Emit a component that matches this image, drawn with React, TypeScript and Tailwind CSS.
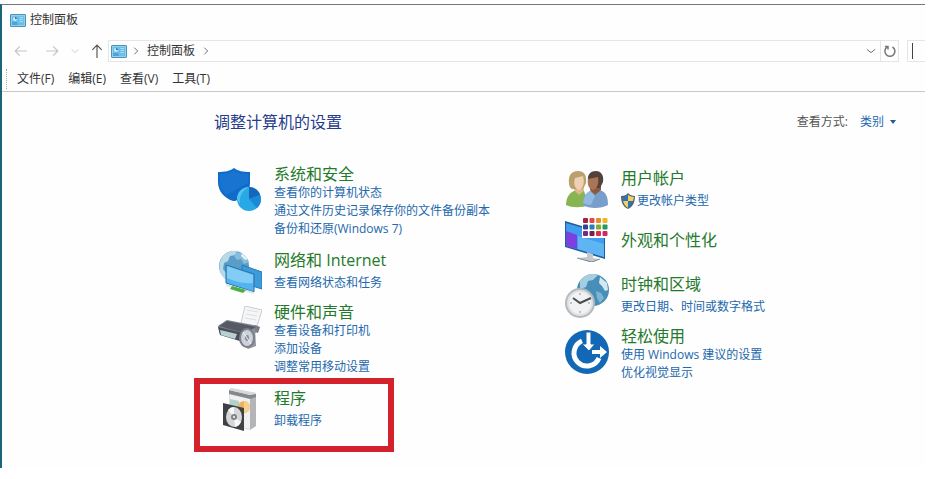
import type { ReactNode } from "react";

const PanelIcon = () => (
  <svg className="block h-[13px] w-4" viewBox="0 0 16 13" aria-hidden="true">
    <rect x=".5" y=".5" width="15" height="12" rx=".5" fill="#8fd0ee" stroke="#4f94b8" />
    <rect x="2" y="2" width="12" height="9" fill="#6bbdea" />
    <circle cx="5" cy="5" r="2" fill="#c9ebfa" />
    <path d="M5 5V3a2 2 0 0 1 2 2z" fill="#2a6f9f" />
    <path d="M9.5 3.5h3.500M9.500 5.500h3.500M9.500 7.500h3.500" stroke="#a9dcf4" />
    <path d="M2 8h5l1 3H2z" fill="#4da3d8" />
  </svg>
);

const ShieldIcon = () => (
  <svg viewBox="0 0 44 44" className="h-11 w-11" aria-hidden="true">
    <path d="M0 4c7 0 12-1 16-4 4 3 9 4 16 4v11c0 9-6 15-15 18h-2C6 30 0 23 0 14z" fill="#0f6cc8" />
    <path d="M2 6c6 0 10-1 14-4 4 3 8 4 14 4v9L8 27C4 23 2 19 2 14z" fill="#1874d0" />
    <circle cx="31" cy="31" r="12" fill="#27a9e6" />
    <path d="M31 31V19a12 12 0 0 1 11 8z" fill="#1468bb" />
    <path d="M31 31l11-4a12 12 0 0 1-3 13z" fill="#1e88d8" />
    <path d="M31 19a12 12 0 0 0-12 12l3 5c-1-8 2-13 9-17z" fill="#56c2f0" />
  </svg>
);

const NetworkIcon = () => (
  <svg viewBox="0 0 44 44" className="h-11 w-11" aria-hidden="true">
    <circle cx="16" cy="16" r="15" fill="#5a9ec8" />
    <path d="M5 6c4-4 9-6 14-5l-2 4-5 1-2 5-4 2-1 6 3 4v7C1 25-1 14 5 6z" fill="#b8d9e7" />
    <path d="M19 2c6 1 10 5 12 10l-5 2-3-5-4 1-3-4z" fill="#86bdd9" />
    <path d="M24 3l6 6-3 1-4-4z" fill="#e4f0f2" />
    <path d="M24 15l20 7v17l-20-6z" fill="#3d9bdc" stroke="#2878b0" />
    <path d="M8 15l28 9v18L8 33z" fill="#52b3ee" stroke="#2572a8" />
    <path d="M9 16l26 9v8c-10 1-19-2-26-5z" fill="#82cdf6" />
    <path d="M8 34l28 8v2L8 36z" fill="#dce4e0" />
    <path d="M14 36l14 4-3 3-13-4z" fill="#4cae47" />
  </svg>
);

const PrinterIcon = () => (
  <svg viewBox="0 0 44 44" className="h-11 w-11" aria-hidden="true">
    <path d="M27 0l17 4-5 16-16-3z" fill="#f5f6f8" stroke="#c9ccd0" />
    <path d="M29 4l11 2M28 8l11 2M27 12l11 2" stroke="#dadee4" />
    <path d="M37 19l5 2-2 6-5-2z" fill="#70757f" />
    <path d="M0 20l9-6 30 6 1 5-14 10L2 28z" fill="#7c8089" />
    <path d="M1 20l8-5 29 6-12 6z" fill="#555a64" />
    <path d="M0 21l25 6v9L2 29z" fill="#494e58" />
    <path d="M2 24l17 4-2 5-14-4z" fill="#b9d0d3" />
    <path d="M22 27l15-4 1 17-8 3-7-6z" fill="#8e939c" />
    <ellipse cx="29" cy="32" rx="7" ry="9" fill="#cdd1d8" stroke="#7b808a" strokeWidth="2" />
    <ellipse cx="29" cy="32" rx="2" ry="3" fill="#858e9a" />
    <path d="M25 26l8 12" stroke="#f4f5f6" />
  </svg>
);

const ProgramsIcon = () => (
  <svg viewBox="0 0 44 44" className="h-11 w-11" aria-hidden="true">
    <path d="M11 2l2-2 25 5v33l-7 4-20-5z" fill="#dcdedf" />
    <path d="M32 8l6-2v32l-6 4z" fill="#b3b5b8" />
    <path d="M12 4l20 5v32l-20-5z" fill="#f0f1f0" />
    <path d="M11 2l21 5 6-1v3l-6 2-21-5z" fill="#85888d" />
    <path d="M13 0l25 5-6 2-21-5z" fill="#d6d8da" />
    <path d="M12 11l9 2v9l-9-2z" fill="#b5d1ca" />
    <circle cx="26" cy="19" r="6" fill="#edb35a" />
    <path d="M26 13v12a6 6 0 0 0 0-12z" fill="#f5d092" />
    <path d="M5 15l21 5v23L5 37z" fill="#3f4144" />
    <ellipse cx="16" cy="29" rx="8" ry="10" fill="#d4d6d8" />
    <path d="M16 29l-6-7a8 10 0 0 1 6-3zM16 29l7 5a8 10 0 0 1-6 5z" fill="#f8f8f8" />
    <circle cx="16" cy="29" r="3" fill="#808387" />
    <circle cx="16" cy="29" r="1" fill="#fff" />
  </svg>
);

const UsersIcon = () => (
  <svg viewBox="0 0 44 44" className="h-11 w-11" aria-hidden="true">
    <path d="M1 37c0-8 4-13 10-15l8 1 5 14c-7 3-17 3-23 0z" fill="#86b552" />
    <path d="M9 22l5 5 5-4-1-5h-8z" fill="#e0b690" />
    <path d="M4 15C3 7 7 3 13 3s9 4 8 12l-3 6H7c-2-1-3-3-3-6z" fill="#b9a06c" />
    <path d="M10 10l8-2c2 7 0 13-4 14-4-1-6-6-4-12z" fill="#efd0b2" />
    <path d="M18 37c0-9 3-13 10-15h7c6 2 8 7 8 15-7 4-19 4-25 0z" fill="#789fcb" />
    <path d="M25 22l5 5 6-5v-6H25z" fill="#8e593f" />
    <path d="M23 13c-1-7 3-10 8-10s8 4 7 11l-3 6h-9z" fill="#54423a" />
    <path d="M23 11l10-2c1 7-1 12-5 13-4-1-6-5-5-11z" fill="#a87558" />
    <path d="M25 23l5 5-4 9c-3 0-6-1-8-2 1-6 3-10 7-12z" fill="#92b9e1" />
  </svg>
);

const swatches = ["#a12443", "#df4a40", "#e88a2f", "#edb82e", "#30468f", "#267fbd", "#7fae35", "#219b58", "#722b88", "#7a1f45", "#d8304c", "#cf2a60"];

const AppearanceIcon = () => (
  <svg viewBox="0 0 44 44" className="h-11 w-11" aria-hidden="true">
    <path d="M0 3l40 12v26L0 29z" fill="#1c5f9c" />
    <path d="M1 5l38 11v23L1 28z" fill="#3f9cee" />
    <path d="M13 18l26 8v13l-26-8z" fill="#5fb4f4" />
    <path d="M1 13l11 4v14L1 28z" fill="#7c3fe0" />
    <path d="M22 34l6 2v4l6 1-7 4-14-5 9-1z" fill="#c3c9ce" />
    <path d="M12 40l15 4 8-3" fill="none" stroke="#808890" />
    <path d="M17 0h27v20H17z" fill="#fff" />
    {swatches.map((fill, i) => (
      <rect key={i} x={18 + (i % 4) * 6.5} y={Math.floor(i / 4) * 6.5} width="5" height="5" rx="1" fill={fill} />
    ))}
  </svg>
);

const ClockIcon = () => (
  <svg viewBox="0 0 44 44" className="h-11 w-11" aria-hidden="true">
    <circle cx="28" cy="16" r="16" fill="#478fb9" />
    <path d="M15 7c4-6 12-9 18-6l-5 5-5 1-2 6-6 2z" fill="#a7cee0" />
    <path d="M35 3l7 6 1 7-3 1-3-5-3-3z" fill="#d5e8ee" />
    <path d="M31 17l5 2 3 5-4 5-3-5z" fill="#7db6d2" />
    <circle cx="15" cy="29" r="14" fill="#dfe3e5" stroke="#b4b9bd" strokeWidth="2" />
    <circle cx="15" cy="29" r="11" fill="#f1f2f3" />
    <path d="M8 24l7 5 11-5" fill="none" stroke="#4b4e51" strokeWidth="2" />
    <path d="M15 19v2M15 37v2M5 29h2M23 29h2" stroke="#8c9196" />
  </svg>
);

const AccessIcon = () => (
  <svg viewBox="0 0 44 44" className="h-11 w-11" aria-hidden="true">
    <circle cx="22" cy="22" r="22" fill="#1268b5" />
    <path d="M17 11A13 13 0 1 0 34 28" fill="none" stroke="#fff" strokeWidth="5" />
    <path d="M21 2h5v12h4l-6 7-7-7h4z" fill="#fff" stroke="#1268b5" />
    <path d="M27 20h8v-4l7 6-7 6v-4h-8z" fill="#fff" />
  </svg>
);

const UacShield = () => (
  <svg viewBox="0 0 16 16" className="h-4 w-4 shrink-0" aria-hidden="true">
    <path d="M0 3c3 0 6-1 7-3 2 2 4 3 7 3 0 6-2 11-7 13C2 14 0 9 0 3z" fill="#56636d" />
    <path d="M1 4c2 0 4-1 6-2v6H2z" fill="#2c73b8" />
    <path d="M7 2c2 1 4 2 6 2l-1 4H7z" fill="#f3d060" />
    <path d="M2 8h5v7C4 13 3 11 2 8z" fill="#f3d060" />
    <path d="M7 8h5c-1 3-2 5-5 7z" fill="#2c73b8" />
  </svg>
);

type Category = {
  title: string;
  links: string[];
  icon: ReactNode;
  space: string;
  shield?: boolean;
  marked?: boolean;
};

const leftCategories: Category[] = [
  { title: "系统和安全", links: ["查看你的计算机状态", "通过文件历史记录保存你的文件备份副本", "备份和还原(Windows 7)"], icon: <ShieldIcon />, space: "" },
  { title: "网络和 Internet", links: ["查看网络状态和任务"], icon: <NetworkIcon />, space: "mt-3" },
  { title: "硬件和声音", links: ["查看设备和打印机", "添加设备", "调整常用移动设置"], icon: <PrinterIcon />, space: "mt-2" },
  { title: "程序", links: ["卸载程序"], icon: <ProgramsIcon />, space: "mt-3", marked: true },
];

const rightCategories: Category[] = [
  { title: "用户帐户", links: ["更改帐户类型"], icon: <UsersIcon />, space: "mt-1", shield: true },
  { title: "外观和个性化", links: [], icon: <AppearanceIcon />, space: "mt-1.5" },
  { title: "时钟和区域", links: ["更改日期、时间或数字格式"], icon: <ClockIcon />, space: "mt-3" },
  { title: "轻松使用", links: ["使用 Windows 建议的设置", "优化视觉显示"], icon: <AccessIcon />, space: "mt-2" },
];

function CategoryItem({ item }: { item: Category }) {
  const count = item.links.length;
  return (
    <section className={`relative flex gap-3 ${count === 0 ? "items-center" : "items-start"} ${item.space}`}>
      <div className={`w-11 shrink-0 ${count > 1 ? "pt-1" : ""}`}>{item.icon}</div>
      <div>
        <h2 className="text-base leading-5">
          <a href="#" className="text-[#247a2b]">{item.title}</a>
        </h2>
        {count > 0 && (
          <ul className={count === 1 ? "mt-1" : ""}>
            {item.links.map((link) => (
              <li key={link} className="text-xs leading-[18px] whitespace-nowrap">
                <a href="#" className="flex items-center text-[#2368ad]">
                  {item.shield && <UacShield />}
                  {link}
                </a>
              </li>
            ))}
          </ul>
        )}
      </div>
      {item.marked && <span className="pointer-events-none absolute -top-2.5 -left-6 h-[74px] w-[200px] border-[6px] border-[#d3222b]" />}
    </section>
  );
}

function Stroke({ d, className }: { d: string; className: string }) {
  return (
    <svg viewBox="0 0 12 12" className={className} fill="none" stroke="currentColor" aria-hidden="true">
      <path d={d} />
    </svg>
  );
}

export default function App() {
  return (
    <div className="min-h-screen bg-white pt-1 pr-1 font-['Open_Sans','Noto_Sans_CJK_SC',sans-serif] text-xs text-[#333]">
      <div className="border-t border-l-2 border-t-[#777] border-l-[#1c6577] bg-[#fefefe] pb-9">
        <header className="border-b border-[#c9c9c9]">
          <div className="flex h-[30px] items-center gap-1 pl-2">
            <PanelIcon />
            <span>控制面板</span>
          </div>
          <div className="mt-1 flex h-6 items-center">
            <div className="flex w-[106px] shrink-0 items-center pl-3">
              <button aria-label="后退" className="w-[31px] text-[#c4c4c4]"><Stroke className="h-3.5 w-3.5" d="M11 6H1M5 2L1 6l4 4" /></button>
              <button aria-label="前进" className="w-[25px] text-[#c4c4c4]"><Stroke className="h-3.5 w-3.5" d="M1 6h10M7 2l4 4-4 4" /></button>
              <button aria-label="最近位置" className="w-5 text-[#c4c4c4]"><Stroke className="h-2.5 w-2.5" d="M2 4l4 4 4-4" /></button>
              <button aria-label="上移" className="text-[#555]"><Stroke className="h-3.5 w-3.5" d="M6 12V1M2 5l4-4 4 4" /></button>
            </div>
            <nav aria-label="地址" className="flex h-[22px] flex-1 items-center border border-[#e5e5e5] pl-0.5">
              <PanelIcon />
              <Stroke className="mx-1 h-2.5 w-2.5 text-[#555]" d="M4 2l4 4-4 4" />
              <a href="#" className="ml-0.5">控制面板</a>
              <Stroke className="ml-1.5 h-2.5 w-2.5 text-[#555]" d="M4 2l4 4-4 4" />
              <button aria-label="展开地址" className="ml-auto px-1 text-[#555]"><Stroke className="h-2.5 w-2.5" d="M1 4l5 4 5-4" /></button>
              <button aria-label="刷新" className="flex h-full w-[18px] items-center justify-center border-l border-[#e5e5e5] text-[#777]">
                <svg viewBox="0 0 12 12" className="h-3 w-3" fill="none" stroke="currentColor" strokeWidth="1.5" aria-hidden="true"><path d="M8.5 2A5 5 0 1 1 3 2.200M1 1.500h3v3" /></svg>
              </button>
            </nav>
            <div className="ml-2 flex h-[22px] w-[18px] items-center border border-r-0 border-[#e5e5e5] pl-1">
              <span className="h-4 w-px shrink-0 bg-[#444]" />
              <input aria-label="搜索控制面板" className="w-full min-w-0 outline-none" />
            </div>
          </div>
          <div className="flex h-7 items-center pt-1 pl-1">
            <span className="h-5 border-l border-dotted border-[#aaa]" />
            <div className="ml-2.5 flex gap-3.5">
              <button>文件(F)</button>
              <button>编辑(E)</button>
              <button>查看(V)</button>
              <button>工具(T)</button>
            </div>
          </div>
        </header>
        <main className="pt-5 pr-[13px] pl-[216px]">
          <div className="-ml-1 flex h-5 items-center justify-between pr-4">
            <h1 className="text-base leading-5 text-[#263c8c]">调整计算机的设置</h1>
            <div className="flex items-center gap-3">
              <label htmlFor="view" className="text-[#555]">查看方式:</label>
              <div className="relative">
                <select id="view" className="w-9 appearance-none bg-transparent p-0 text-[#2368ad] outline-none">
                  <option>类别</option>
                </select>
                <svg viewBox="0 0 6 4" className="pointer-events-none absolute inset-y-0 right-0 my-auto h-1 w-1.5" aria-hidden="true"><path d="M0 0h6L3 4z" fill="#245a8d" /></svg>
              </div>
            </div>
          </div>
          <div className="mt-8 grid grid-cols-2">
            <div>{leftCategories.map((item) => <CategoryItem key={item.title} item={item} />)}</div>
            <div>{rightCategories.map((item) => <CategoryItem key={item.title} item={item} />)}</div>
          </div>
        </main>
      </div>
    </div>
  );
}
